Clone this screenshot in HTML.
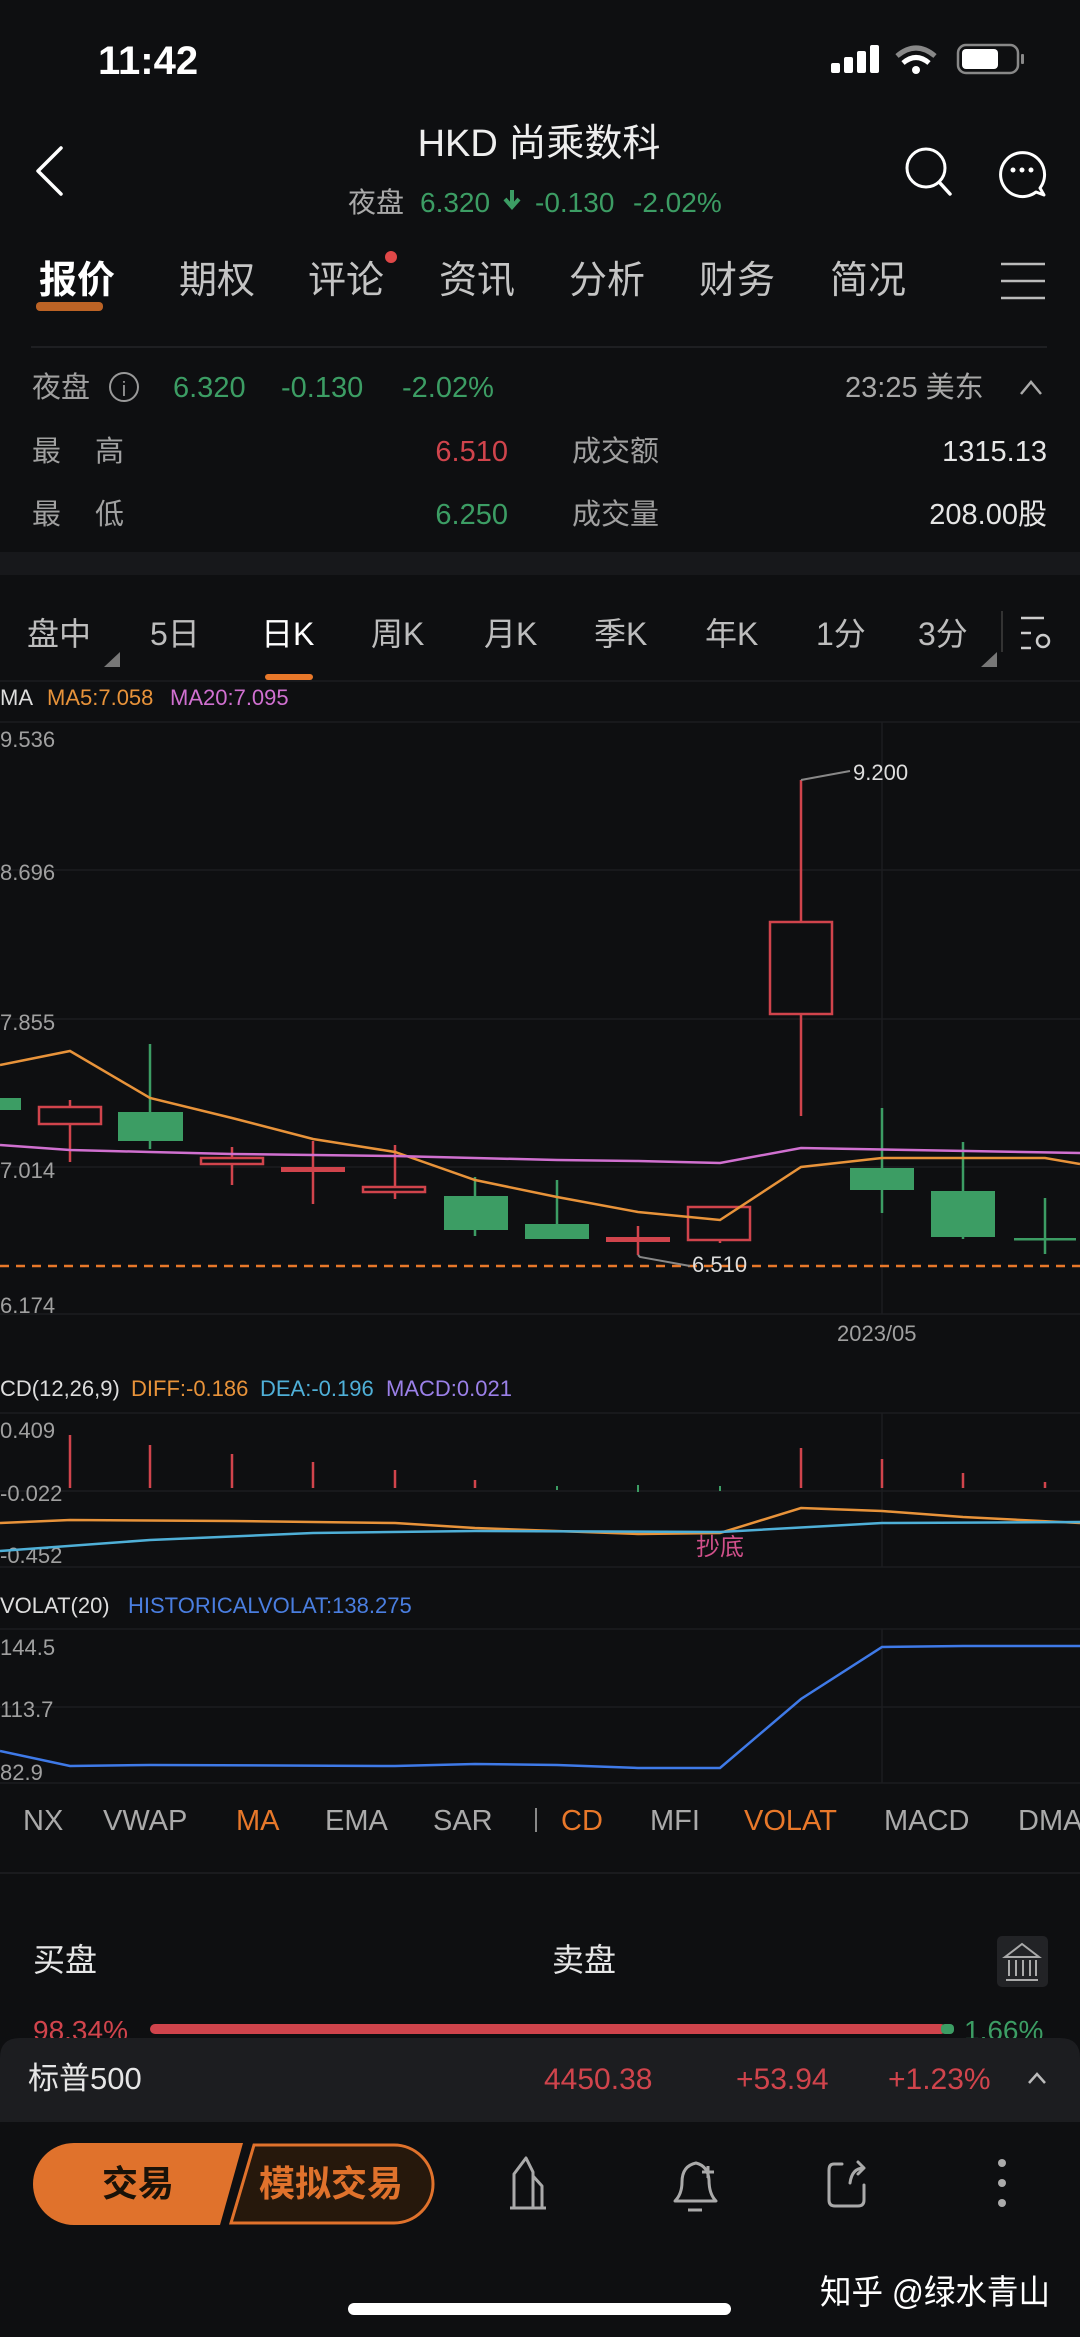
<!DOCTYPE html>
<html><head><meta charset="utf-8"><style>
html,body{margin:0;padding:0;background:#0e0f11;}
svg{display:block;font-family:"Liberation Sans","Noto Sans CJK SC",sans-serif;}
</style></head><body>
<svg width="1080" height="2337" viewBox="0 0 1080 2337" xmlns="http://www.w3.org/2000/svg">
<rect width="1080" height="2337" fill="#0e0f11"/>
<text x="98" y="74" font-size="40" font-weight="bold" fill="#fff">11:42</text>
<rect x="831" y="63" width="9" height="10" rx="2" fill="#fff"/>
<rect x="844" y="57" width="9" height="16" rx="2" fill="#fff"/>
<rect x="857" y="51" width="9" height="22" rx="2" fill="#fff"/>
<rect x="870" y="45" width="9" height="28" rx="2" fill="#fff"/>
<path d="M897 56 Q916 40 935 56" stroke="#888" stroke-width="5" fill="none"/>
<path d="M903 63 Q916 52 929 63" stroke="#fff" stroke-width="5" fill="none"/>
<circle cx="916" cy="70" r="4" fill="#fff"/>
<rect x="958" y="45" width="60" height="28" rx="8" stroke="#888" stroke-width="2.5" fill="none"/>
<rect x="962" y="49" width="36" height="20" rx="4" fill="#fff"/>
<rect x="1021" y="54" width="3" height="10" rx="1" fill="#888"/>
<path d="M61 148 L38 171 L61 194" stroke="#fff" stroke-width="3.5" fill="none" stroke-linecap="round" stroke-linejoin="round"/>
<text x="539" y="156" font-size="38" fill="#eee" text-anchor="middle">HKD 尚乘数科</text>
<text y="212" font-size="28"><tspan x="348" fill="#aaa">夜盘</tspan><tspan x="420" fill="#3c9d64">6.320</tspan><tspan x="535" fill="#3c9d64">-0.130</tspan><tspan x="633" fill="#3c9d64">-2.02%</tspan></text>
<path d="M512 190 v14 M505 199 l7 8 l7 -8" stroke="#3c9d64" stroke-width="4" fill="none"/>
<circle cx="926" cy="168" r="19" stroke="#fff" stroke-width="3" fill="none"/>
<path d="M940 183 L950 194" stroke="#fff" stroke-width="3.5" stroke-linecap="round"/>
<path d="M1040 188 A22 22 0 1 0 1036 192 L1044 195 Z" stroke="#fff" stroke-width="3" fill="none" stroke-linejoin="round"/>
<circle cx="1013" cy="170" r="2.5" fill="#fff"/><circle cx="1022" cy="170" r="2.5" fill="#fff"/><circle cx="1031" cy="170" r="2.5" fill="#fff"/>
<rect x="36" y="302" width="67" height="9" rx="4" fill="#e8782a" opacity="0.8"/>
<text y="293" font-size="38" fill="#c4c4c4"><tspan x="39" fill="#fff" font-weight="bold">报价</tspan><tspan x="179">期权</tspan><tspan x="308">评论</tspan><tspan x="439">资讯</tspan><tspan x="569">分析</tspan><tspan x="699">财务</tspan><tspan x="830">简况</tspan></text>
<circle cx="391" cy="257" r="6" fill="#e04848"/>
<path d="M1001 264 H1045 M1001 281 H1045 M1001 298 H1045" stroke="#bbb" stroke-width="2.5"/>
<line x1="31" y1="347" x2="1047" y2="347" stroke="#1e1f22" stroke-width="2"/>
<g font-size="29">
<text x="32" y="397" fill="#a0a0a0">夜盘</text>
<circle cx="124" cy="387" r="14" stroke="#999" stroke-width="2" fill="none"/>
<text x="124" y="396" font-size="20" fill="#999" text-anchor="middle">i</text>
<text x="173" y="397" fill="#3c9d64">6.320</text>
<text x="281" y="397" fill="#3c9d64">-0.130</text>
<text x="402" y="397" fill="#3c9d64">-2.02%</text>
<text x="845" y="397" fill="#a8a8a8">23:25 美东</text>
<path d="M1021 394 L1031 382 L1041 394" stroke="#aaa" stroke-width="2.5" fill="none"/>
<text x="32" y="461" fill="#a0a0a0">最</text><text x="95" y="461" fill="#a0a0a0">高</text>
<text x="508" y="461" fill="#d0444c" text-anchor="end">6.510</text>
<text x="572" y="461" fill="#a0a0a0">成交额</text>
<text x="1047" y="461" fill="#e6e6e6" text-anchor="end">1315.13</text>
<text x="32" y="524" fill="#a0a0a0">最</text><text x="95" y="524" fill="#a0a0a0">低</text>
<text x="508" y="524" fill="#3c9d64" text-anchor="end">6.250</text>
<text x="572" y="524" fill="#a0a0a0">成交量</text>
<text x="1047" y="524" fill="#e6e6e6" text-anchor="end">208.00股</text>
</g>
<rect x="0" y="552" width="1080" height="23" fill="#17181b"/>
<text y="645" font-size="32" fill="#bdbdbd"><tspan x="27">盘中</tspan><tspan x="150">5日</tspan><tspan x="261" fill="#fff">日K</tspan><tspan x="371">周K</tspan><tspan x="484">月K</tspan><tspan x="594">季K</tspan><tspan x="705">年K</tspan><tspan x="816">1分</tspan><tspan x="918">3分</tspan></text>
<path d="M120 652 L120 667 L104 667 Z" fill="#777"/>
<path d="M997 652 L997 667 L981 667 Z" fill="#777"/>
<line x1="1002" y1="611" x2="1002" y2="652" stroke="#333" stroke-width="2"/>
<path d="M1021 618 H1044 M1021 633 H1031 M1021 648 H1031" stroke="#ccc" stroke-width="2.5"/>
<circle cx="1043" cy="641" r="6" stroke="#ccc" stroke-width="2.5" fill="none"/>
<rect x="265" y="674" width="48" height="6" rx="3" fill="#e8782a"/>
<line x1="0" y1="681" x2="1080" y2="681" stroke="#1c1d20" stroke-width="1.5"/>
<text y="705" font-size="22"><tspan x="0" fill="#ddd">MA</tspan><tspan x="47" fill="#e8933a">MA5:7.058</tspan><tspan x="170" fill="#d070d0">MA20:7.095</tspan></text>
<g stroke="#1c1d20" stroke-width="1.5">
<line x1="0" y1="722" x2="1080" y2="722"/><line x1="0" y1="870" x2="1080" y2="870"/><line x1="0" y1="1019" x2="1080" y2="1019"/><line x1="0" y1="1167" x2="1080" y2="1167"/><line x1="0" y1="1314" x2="1080" y2="1314"/>
<line x1="882" y1="722" x2="882" y2="1314"/>
<line x1="0" y1="1413" x2="1080" y2="1413"/><line x1="0" y1="1491" x2="1080" y2="1491"/><line x1="0" y1="1567" x2="1080" y2="1567"/>
<line x1="882" y1="1413" x2="882" y2="1567"/>
<line x1="0" y1="1629" x2="1080" y2="1629"/><line x1="0" y1="1707" x2="1080" y2="1707"/><line x1="0" y1="1783" x2="1080" y2="1783"/>
<line x1="882" y1="1629" x2="882" y2="1783"/>
</g>
<g font-size="22" fill="#a0a0a0">
<text x="0" y="747">9.536</text><text x="0" y="880">8.696</text><text x="0" y="1030">7.855</text><text x="0" y="1178">7.014</text><text x="0" y="1313">6.174</text>
<text x="837" y="1341">2023/05</text>
</g>
<line x1="0" y1="1266" x2="1080" y2="1266" stroke="#e8782a" stroke-width="2.5" stroke-dasharray="9 7"/>
<g stroke-width="2.5">
<rect x="0" y="1098" width="21" height="12" fill="#3c9d64"/>
<line x1="70" y1="1100" x2="70" y2="1162" stroke="#d0444c"/><rect x="39" y="1107" width="62" height="17" fill="#0e0f11" stroke="#d0444c"/>
<line x1="150" y1="1044" x2="150" y2="1149" stroke="#3c9d64"/><rect x="118" y="1112" width="65" height="29" fill="#3c9d64"/>
<line x1="232" y1="1147" x2="232" y2="1185" stroke="#d0444c"/><rect x="201" y="1158" width="62" height="6" fill="#0e0f11" stroke="#d0444c"/>
<line x1="313" y1="1141" x2="313" y2="1204" stroke="#d0444c"/><rect x="281" y="1167" width="64" height="5" fill="#d0444c"/>
<line x1="395" y1="1145" x2="395" y2="1199" stroke="#d0444c"/><rect x="363" y="1187" width="62" height="5" fill="#0e0f11" stroke="#d0444c"/>
<line x1="475" y1="1177" x2="475" y2="1236" stroke="#3c9d64"/><rect x="444" y="1196" width="64" height="34" fill="#3c9d64"/>
<line x1="557" y1="1180" x2="557" y2="1239" stroke="#3c9d64"/><rect x="525" y="1224" width="64" height="15" fill="#3c9d64"/>
<line x1="638" y1="1226" x2="638" y2="1255" stroke="#d0444c"/><rect x="606" y="1237" width="64" height="5" fill="#d0444c"/>
<line x1="720" y1="1236" x2="720" y2="1243" stroke="#d0444c"/><rect x="688" y="1207" width="62" height="33" fill="#0e0f11" stroke="#d0444c"/>
<line x1="801" y1="780" x2="801" y2="1116" stroke="#d0444c"/><rect x="770" y="922" width="62" height="92" fill="#0e0f11" stroke="#d0444c"/>
<line x1="882" y1="1108" x2="882" y2="1213" stroke="#3c9d64"/><rect x="850" y="1168" width="64" height="22" fill="#3c9d64"/>
<line x1="963" y1="1142" x2="963" y2="1239" stroke="#3c9d64"/><rect x="931" y="1191" width="64" height="46" fill="#3c9d64"/>
<line x1="1045" y1="1198" x2="1045" y2="1254" stroke="#3c9d64"/><rect x="1014" y="1238" width="62" height="2.5" fill="#3c9d64"/>
</g>
<path d="M801 780 L850 771" stroke="#888" stroke-width="2" fill="none"/>
<text x="853" y="780" font-size="22" fill="#ddd">9.200</text>
<path d="M638 1255 L640 1257 L690 1266" stroke="#888" stroke-width="2" fill="none"/>
<text x="692" y="1272" font-size="22" fill="#ddd">6.510</text>
<polyline fill="none" stroke="#e8933a" stroke-width="2.5" points="0,1065 70,1051 150,1098 232,1118 313,1139 395,1152 475,1180 557,1197 638,1212 720,1220 801,1167 882,1158 963,1158 1045,1158 1080,1164"/>
<polyline fill="none" stroke="#d070d0" stroke-width="2.5" points="0,1145 70,1150 150,1152 232,1154 395,1156 557,1160 638,1161 720,1163 801,1148 1080,1153"/>
<text y="1396" font-size="22"><tspan x="0" fill="#ddd">CD(12,26,9)</tspan><tspan x="131" fill="#e8933a">DIFF:-0.186</tspan><tspan x="260" fill="#4fb0d8">DEA:-0.196</tspan><tspan x="386" fill="#9b80e8">MACD:0.021</tspan></text>
<g font-size="22" fill="#a0a0a0"><text x="0" y="1438">0.409</text><text x="0" y="1501">-0.022</text><text x="0" y="1563">-0.452</text></g>
<g stroke="#d0444c" stroke-width="2.5">
<line x1="70" y1="1435" x2="70" y2="1488"/><line x1="150" y1="1445" x2="150" y2="1488"/><line x1="232" y1="1454" x2="232" y2="1488"/><line x1="313" y1="1462" x2="313" y2="1488"/><line x1="395" y1="1470" x2="395" y2="1488"/><line x1="475" y1="1480" x2="475" y2="1488"/>
<line x1="801" y1="1448" x2="801" y2="1488"/><line x1="882" y1="1459" x2="882" y2="1488"/><line x1="963" y1="1473" x2="963" y2="1488"/><line x1="1045" y1="1482" x2="1045" y2="1488"/>
</g>
<g stroke="#3c9d64" stroke-width="2"><line x1="557" y1="1486" x2="557" y2="1490"/><line x1="638" y1="1485" x2="638" y2="1492"/><line x1="720" y1="1486" x2="720" y2="1491"/></g>
<polyline fill="none" stroke="#e8933a" stroke-width="2.5" points="0,1523 70,1520 232,1521 395,1523 475,1528 638,1534 720,1533 801,1508 882,1511 963,1517 1080,1523"/>
<polyline fill="none" stroke="#4fb0d8" stroke-width="2.5" points="0,1551 150,1540 313,1533 475,1531 720,1532 882,1523 1080,1522"/>
<text x="720" y="1555" font-size="24" fill="#d0508a" text-anchor="middle">抄底</text>
<text y="1613" font-size="22"><tspan x="0" fill="#ddd">VOLAT(20)</tspan><tspan x="128" fill="#4a7ee0">HISTORICALVOLAT:138.275</tspan></text>
<g font-size="22" fill="#a0a0a0"><text x="0" y="1655">144.5</text><text x="0" y="1717">113.7</text><text x="0" y="1780">82.9</text></g>
<polyline fill="none" stroke="#3f7ae8" stroke-width="2.5" points="0,1751 70,1766 150,1765 395,1766 475,1764 557,1765 638,1768 720,1768 801,1699 882,1647 963,1646 1080,1646"/>
<text y="1830" font-size="29" fill="#aaa"><tspan x="23">NX</tspan><tspan x="103">VWAP</tspan><tspan x="236" fill="#e8782a">MA</tspan><tspan x="325">EMA</tspan><tspan x="433">SAR</tspan><tspan x="561" fill="#e8782a">CD</tspan><tspan x="650">MFI</tspan><tspan x="744" fill="#e8782a">VOLAT</tspan><tspan x="884">MACD</tspan><tspan x="1018">DMA</tspan></text>
<line x1="536" y1="1808" x2="536" y2="1832" stroke="#888" stroke-width="2"/>
<line x1="0" y1="1873" x2="1080" y2="1873" stroke="#1a1b1e" stroke-width="2"/>
<text x="33" y="1971" font-size="32" fill="#e6e6e6">买盘</text>
<text x="552" y="1971" font-size="32" fill="#e6e6e6">卖盘</text>
<rect x="997" y="1936" width="51" height="51" rx="5" fill="#222326"/>
<path d="M1005 1957 L1022 1944 L1039 1957 Z M1006 1980 H1038 M1009 1960 V1976 M1016 1960 V1976 M1023 1960 V1976 M1030 1960 V1976 M1036 1960 V1976" stroke="#aaa" stroke-width="2" fill="none"/>
<text x="33" y="2040" font-size="28" fill="#d0444c">98.34%</text>
<rect x="150" y="2024" width="796" height="10" rx="5" fill="#d0444c"/>
<rect x="941" y="2024" width="13" height="10" rx="4" fill="#3c9d64"/>
<text x="964" y="2040" font-size="28" fill="#3c9d64">1.66%</text>
<path d="M0 2058 Q0 2038 20 2038 H1060 Q1080 2038 1080 2058 V2122 H0 Z" fill="#1c1d20"/>
<text x="28" y="2089" font-size="31" fill="#e6e6e6">标普500</text>
<text y="2089" font-size="30" fill="#d0444c"><tspan x="544">4450.38</tspan><tspan x="736">+53.94</tspan><tspan x="888">+1.23%</tspan></text>
<path d="M1029 2083 L1037 2074 L1045 2083" stroke="#bbb" stroke-width="2.5" fill="none"/>
<path d="M74 2143 H243 L220 2225 H74 A41 41 0 0 1 74 2143 Z" fill="#e0722c"/>
<path d="M254 2145 H394 A39 39 0 0 1 394 2223 H231 Z" fill="#26180c" stroke="#e0722c" stroke-width="3"/>
<text x="138" y="2196" font-size="36" font-weight="bold" fill="#1a1208" text-anchor="middle">交易</text>
<text x="331" y="2196" font-size="36" font-weight="bold" fill="#e0722c" text-anchor="middle">模拟交易</text>
<path d="M510 2208 H546 M514 2207 V2174 L526 2158 L533 2172 V2207 M533 2176 L542 2186 V2207" stroke="#aaa" stroke-width="3" fill="none" stroke-linejoin="round"/>
<path d="M675 2201 Q682 2194 682 2182 Q682 2166 696 2163 Q708 2166 709 2180 Q709 2194 716 2201 Z M688 2210 H702" stroke="#aaa" stroke-width="3" fill="none" stroke-linejoin="round"/>
<path d="M702 2172 H714 M708 2166 V2178" stroke="#aaa" stroke-width="3"/>
<path d="M842 2164 H834 Q829 2164 829 2170 V2200 Q829 2206 835 2206 H858 Q864 2206 864 2200 V2185 M850 2183 Q852 2168 864 2168 L858 2162 M864 2168 L858 2174" stroke="#aaa" stroke-width="3" fill="none" stroke-linecap="round" stroke-linejoin="round"/>
<circle cx="1002" cy="2163" r="4" fill="#aaa"/><circle cx="1002" cy="2183" r="4" fill="#aaa"/><circle cx="1002" cy="2203" r="4" fill="#aaa"/>
<text x="820" y="2304" font-size="34" fill="#fff" textLength="230" lengthAdjust="spacingAndGlyphs">知乎 @绿水青山</text>
<rect x="348" y="2303" width="383" height="12" rx="6" fill="#fff"/>
</svg>
</body></html>
